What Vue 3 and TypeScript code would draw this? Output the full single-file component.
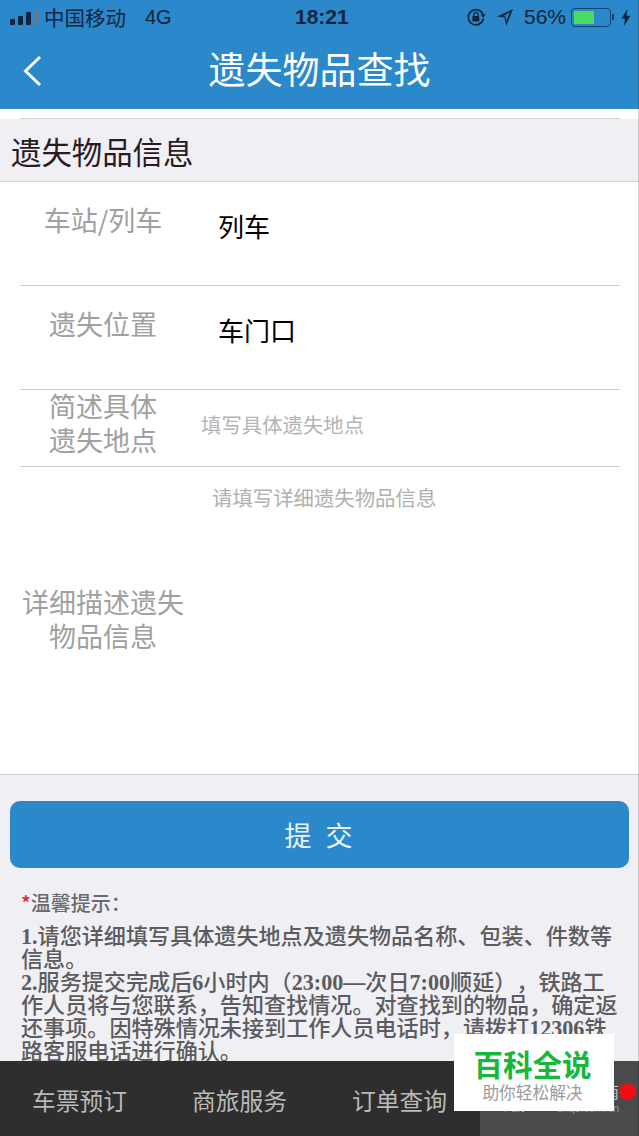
<template>
  <div class="page">
    <header class="header">
      <div class="status">
        <div class="signal">
          <i class="bar b1"></i><i class="bar b2"></i><i class="bar b3"></i><i class="bar b4"></i>
        </div>
        <span class="carrier">中国移动</span>
        <span class="net">4G</span>
        <span class="clock">18:21</span>
        <div class="status-right">
          <svg class="lock" width="20" height="20" viewBox="0 0 20 20">
            <path d="M17 7.5A7.6 7.6 0 1 0 17.4 11.6" fill="none" stroke="#10243c" stroke-width="1.7" />
            <path d="M19.6 7.2 L14.6 7.2 L17.2 11 Z" fill="#10243c" />
            <rect x="6.3" y="9" width="7" height="5.4" rx="0.8" fill="#10243c" />
            <path d="M7.8 9V7.5a2.1 2.1 0 0 1 4.2 0V9" fill="none" stroke="#10243c" stroke-width="1.2" />
          </svg>
          <svg class="arrow" width="18" height="19" viewBox="0 0 18 19">
            <path d="M17 1 L1 8.4 L8.6 9.6 L10.2 18 Z M14 4 L7.6 8.2 L9.6 8.6 L10.4 13 Z" fill="#10243c" fill-rule="evenodd" />
          </svg>
          <span class="percent">56%</span>
          <div class="battery"><div class="level" :style="{ width: batteryLevel + '%' }"></div></div>
          <i class="nub"></i>
          <svg class="bolt" width="10" height="17" viewBox="0 0 10 17">
            <path d="M6.5 0 L0.5 9.6 L4 9.6 L3 17 L9.5 6.8 L5.6 6.8 Z" fill="#10243c" />
          </svg>
        </div>
      </div>
      <div class="nav">
        <svg class="back" width="20" height="32" viewBox="0 0 20 32">
          <path d="M18 2 L3.5 16 L18 30" fill="none" stroke="#fff" stroke-width="3" />
        </svg>
        <h1>遗失物品查找</h1>
      </div>
    </header>

    <main class="content">
      <div class="gap"><div class="gap-line"></div></div>
      <h2 class="section">遗失物品信息</h2>
      <div class="form">
        <div class="row tall">
          <label>车站/列车</label>
          <span class="value">列车</span>
        </div>
        <div class="row tall">
          <label>遗失位置</label>
          <span class="value">车门口</span>
        </div>
        <div class="row short">
          <label>简述具体<br />遗失地点</label>
          <span class="hint">填写具体遗失地点</span>
        </div>
        <div class="row detail">
          <label>详细描述遗失<br />物品信息</label>
          <span class="hint area">请填写详细遗失物品信息</span>
        </div>
      </div>
      <div class="actions">
        <button class="submit">提 交</button>
      </div>
      <div class="tips">
        <p class="tips-title"><span class="star">*</span>温馨提示：</p>
        <p class="tip"><b>1.</b>请您详细填写具体遗失地点及遗失物品名称、包装、件数等信息。</p>
        <p class="tip">
          <b>2.</b>服务提交完成后<b>6</b>小时内（<b>23:00—</b>次日<b>7:00</b>顺延），铁路工作人员将与您联系，告知查找情况。对查找到的物品，确定返还事项。因特殊情况未接到工作人员电话时，请拨打<b>12306</b>铁路客服电话进行确认。
        </p>
      </div>
    </main>

    <footer class="tabs">
      <div v-for="tab in tabs" :key="tab" class="tab">{{ tab }}</div>
      <div class="tab more">
        <span class="more-top">出行指南</span>
        <div class="more-row">
          <span class="more-title">我的12306</span>
          <span class="more-sub">bkqs.com.cn</span>
        </div>
      </div>
    </footer>

    <div class="badge">
      <div class="badge-title">百科全说</div>
      <div class="badge-sub">助你轻松解决</div>
    </div>
    <i class="dot"></i>
  </div>
</template>

<script setup lang="ts">
const batteryLevel = 58

const tabs: string[] = ['车票预订', '商旅服务', '订单查询']
</script>

<style>
body {
  margin: 0;
}
</style>

<style scoped>
.page {
  position: relative;
  display: flex;
  flex-direction: column;
  width: 639px;
  height: 1136px;
  overflow: hidden;
  background: #efeff4;
  font-family: "Noto Sans CJK SC", "Liberation Sans", sans-serif;
}

/* thin dark edge the screenshot has down its right side */
.page::after {
  content: "";
  position: absolute;
  top: 0;
  right: 0;
  bottom: 0;
  width: 1px;
  background: rgba(0, 0, 0, 0.16);
}

.header {
  flex: none;
  height: 109px;
  background: #2a88cb;
}

.status {
  position: relative;
  display: flex;
  align-items: center;
  height: 34px;
  padding: 0 8px 0 10px;
  color: #10243c;
}

.signal {
  display: flex;
  align-items: flex-end;
  gap: 3px;
  height: 16px;
  margin-right: 7px;
}

.bar {
  display: block;
  width: 5px;
  background: #10243c;
  border-radius: 1px;
}

.b1 { height: 6px; }
.b2 { height: 9px; }
.b3 { height: 13px; }
.b4 { height: 16px; background: #4f7ea6; }

.carrier {
  margin-left: -2px;
  font-size: 20.5px;
  line-height: 34px;
}

.net {
  margin-left: 19px;
  font: 20px "Liberation Sans", sans-serif;
}

.clock {
  position: absolute;
  left: 295px;
  font: bold 21px "Liberation Sans", sans-serif;
}

.status-right {
  display: flex;
  align-items: center;
  margin-left: auto;
}

.lock {
  margin-right: 10px;
}

.arrow {
  margin-right: 10px;
}

.percent {
  font: 21px "Liberation Sans", sans-serif;
  margin-right: 5px;
}

.battery {
  box-sizing: border-box;
  width: 40px;
  height: 19px;
  padding: 2px;
  border: 1px solid #14406e;
  border-radius: 4px;
}

.level {
  height: 100%;
  background: #4cd964;
}

.nub {
  width: 2px;
  height: 6px;
  margin: 0 7px 0 1px;
  background: #14406e;
}

.nav {
  position: relative;
  display: flex;
  align-items: center;
  justify-content: center;
  height: 70px;
}

.nav h1 {
  margin: 0 0 2px;
  font-size: 37px;
  font-weight: 400;
  color: #fff;
}

.back {
  position: absolute;
  left: 22px;
  top: 21px;
}

.content {
  flex: 1;
  min-height: 0;
  overflow: hidden;
}

.gap {
  box-sizing: border-box;
  height: 10px;
  padding: 9px 19px 0 20px;
  background: #fff;
}

.gap-line {
  height: 1px;
  background: #d4d4d6;
}

.section {
  box-sizing: border-box;
  height: 63px;
  margin: 0;
  padding-left: 11px;
  font-size: 30.4px;
  font-weight: 400;
  line-height: 64px;
  color: #2a1a22;
  border-bottom: 1px solid #d4d4d6;
}

.form {
  box-sizing: border-box;
  height: 593px;
  padding: 0 19px 0 20px;
  background: #fff;
  border-bottom: 1px solid #cfcfd2;
}

.row {
  display: flex;
  box-sizing: border-box;
  border-bottom: 1px solid #cfcfd2;
}

.row label {
  flex: none;
  width: 166px;
  font-size: 27px;
  line-height: 34px;
  text-align: center;
  color: #a0a0a0;
}

.tall {
  height: 104px;
  padding-top: 21px;
}

.value {
  margin: 6px 0 0 32px;
  font-size: 26px;
  line-height: 34px;
  color: #000;
}

.short {
  height: 77px;
  align-items: center;
}

.short label {
  margin-bottom: 10px;
}

.hint {
  margin: 0 0 8px 15px;
  font-size: 20.4px;
  color: #b4b4b4;
}

.detail {
  position: relative;
  height: 307px;
  align-items: center;
  border-bottom: 0;
}

.detail label {
  margin-bottom: 4px;
}

.area {
  position: absolute;
  top: 15px;
  left: 192px;
  margin: 0;
  white-space: nowrap;
  color: #b0b0b0;
}

.actions {
  padding: 26px 10px 0;
}

.submit {
  display: block;
  width: 100%;
  height: 67px;
  padding: 0;
  border: 0;
  border-radius: 10px;
  background: #2a88cb;
  color: #eaf3fa;
  font: 27px "Noto Sans CJK SC", sans-serif;
  letter-spacing: 2px;
  word-spacing: 4px;
}

.tips {
  padding: 20px 15px 0 21px;
  font-family: "Liberation Serif", "Noto Sans CJK SC", serif;
  color: #5c5c60;
  font-weight: 500;
  font-size: 22.1px;
  line-height: 23px;
  text-spacing-trim: space-all;
}

.tips p {
  margin: 0;
}

.tips b {
  font-weight: 700;
}

.tips .tips-title {
  margin-bottom: 7px;
  font-family: "Noto Sans CJK SC", sans-serif;
  font-size: 20px;
  line-height: 30px;
  color: #6a6a6e;
}

.star {
  color: #e0262a;
}

.tabs {
  flex: none;
  display: flex;
  height: 75px;
  background: #2e2e2e;
}

.tab {
  flex: none;
  box-sizing: border-box;
  width: 160px;
  padding-right: 1px;
  font-size: 23.8px;
  line-height: 77px;
  text-align: center;
  color: #b9b9b9;
}

.more {
  display: flex;
  flex-direction: column;
  width: 159px;
  padding: 21px 20px 0 23px;
  background: #4a4a4a;
}

.more-top {
  font-size: 16px;
  line-height: 18px;
  text-align: right;
  color: #c4c4c4;
}

.more-row {
  display: flex;
  align-items: flex-end;
  justify-content: space-between;
  margin-top: -1px;
  line-height: 16px;
}

.more-title {
  font: bold 11px "Liberation Sans", sans-serif;
  color: #fff;
}

.more-sub {
  font: 11px "Liberation Sans", sans-serif;
  color: #969696;
}

.badge {
  position: absolute;
  left: 454px;
  top: 1034px;
  box-sizing: border-box;
  width: 160px;
  height: 77px;
  padding-right: 3px;
  background: #fff;
  text-align: center;
}

.badge-title {
  margin-top: 11px;
  font-size: 29.5px;
  font-weight: 700;
  line-height: 36px;
  color: #14b83c;
}

.badge-sub {
  font-size: 16.7px;
  line-height: 22px;
  color: #9a9a9a;
}

.dot {
  position: absolute;
  left: 619px;
  top: 1083px;
  width: 17px;
  height: 17px;
  border-radius: 50%;
  background: #f20d12;
}
</style>
